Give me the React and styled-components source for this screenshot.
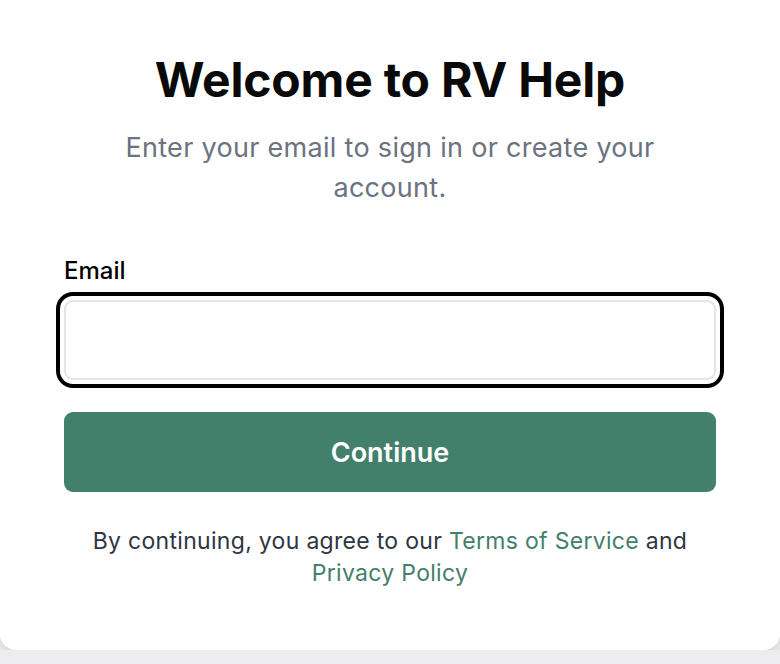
import styled, { createGlobalStyle } from 'styled-components';

const GlobalStyle = createGlobalStyle`
	* {
		box-sizing: border-box;
	}

	body {
		margin: 0;
		background: #ededef;
		font-family: 'Inter', 'Noto Sans', sans-serif;
	}
`;

const Card = styled.main`
	width: 780px;
	padding: 51px 64px 61px;
	background: #fff;
	border-radius: 0 0 16px 16px;
	box-shadow: 0 4px 10px rgba(0, 0, 0, .1);

	display: flex;
	flex-direction: column;
	align-items: center;
`;

const Title = styled.h1`
	margin: 0;
	font-size: 48px;
	line-height: 58px;
	font-weight: 700;
	letter-spacing: -0.2px;
	color: #0a0a0a;
`;

const Subtitle = styled.p`
	margin: 19px 0 0;
	max-width: 580px;
	font-size: 27px;
	line-height: 40px;
	letter-spacing: 0.3px;
	text-align: center;
	color: #6b7280;
`;

const Field = styled.div`
	width: 100%;
	margin-top: 47px;
	display: flex;
	flex-direction: column;
	gap: 13px;
`;

const Label = styled.label`
	font-size: 24px;
	line-height: 32px;
	font-weight: 500;
	color: #000;
`;

const Input = styled.input`
	width: 100%;
	height: 80px;
	padding: 0 20px;
	font: inherit;
	font-size: 24px;
	border: 2px solid #e5e5e5;
	border-radius: 9px;
	outline: none;
	box-shadow: 0 0 0 4px #fff, 0 0 0 8px #000;
`;

const Button = styled.button`
	width: 100%;
	height: 80px;
	margin-top: 32px;
	border: 0;
	border-radius: 9px;
	background: #43806b;
	color: #fff;
	font: inherit;
	font-size: 27px;
	font-weight: 600;
	cursor: pointer;
`;

const Legal = styled.p`
	margin: 33px 0 0;
	font-size: 23px;
	line-height: 32px;
	letter-spacing: 0.3px;
	text-align: center;
	color: #2f3542;
`;

const Link = styled.a`
	color: #43806b;
	text-decoration: none;
	white-space: ${props => props.$nowrap ? 'nowrap' : 'normal'};
`;

const App = () => {
	return (
		<>
			<GlobalStyle />
			<Card>
				<Title>Welcome to RV Help</Title>
				<Subtitle>Enter your email to sign in or create your account.</Subtitle>

				<Field>
					<Label htmlFor="email">Email</Label>
					<Input id="email" type="email" />
				</Field>

				<Button onClick={e => e.preventDefault()}>Continue</Button>

				<Legal>
					By continuing, you agree to our <Link href="#">Terms of Service</Link> and{' '}
					<Link href="#" $nowrap>Privacy Policy</Link>
				</Legal>
			</Card>
		</>
	)
}

export default App;
